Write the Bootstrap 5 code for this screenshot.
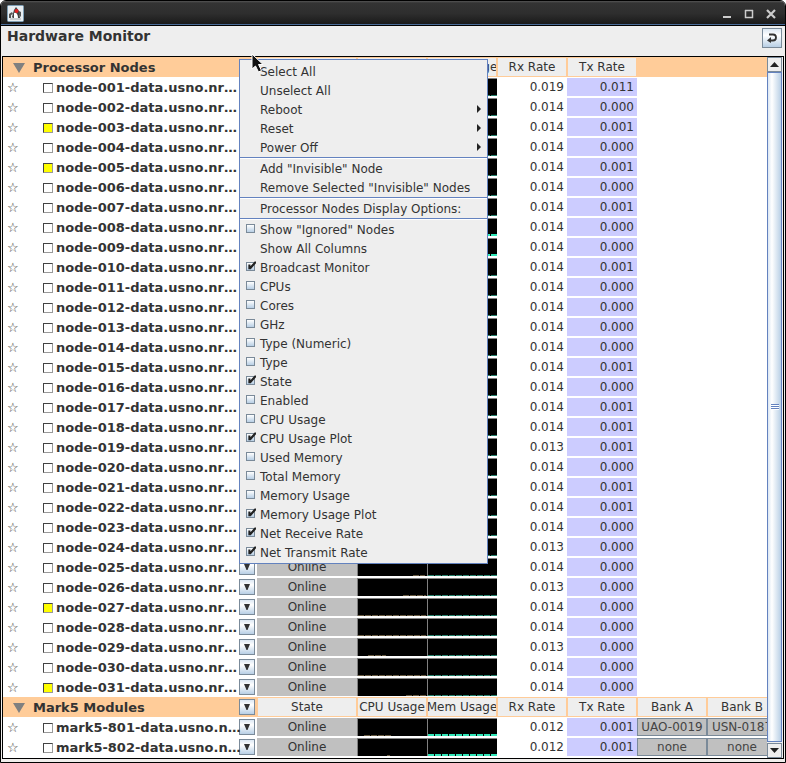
<!DOCTYPE html>
<html lang="en">
<head>
<meta charset="utf-8">
<meta name="viewport" content="width=device-width, initial-scale=1">
<title>Hardware Monitor</title>
<link href="https://cdn.jsdelivr.net/npm/bootstrap@5.3.0/dist/css/bootstrap.min.css" rel="stylesheet">
<style>
:root { --ink:#333; --edge:#7a8a99; --blue:#6382bf; --peach:#ffcc99; --panel:#eee; --metal:linear-gradient(#dde8f3,#fff 35%,#b8cfe5); }
body { font-family:"DejaVu Sans",sans-serif; font-size:12px; line-height:18px; color:var(--ink); background:#fff; }
button { color:inherit; font:inherit; padding:0; }
.frame { min-height:100vh; background:#f0eeec; border:1px solid #000; border-radius:6px 6px 0 0; overflow:hidden; padding:0 1px 3px; }
.titlebar { height:25px; margin:0 -1px; padding:0 3px 0 6px; background:linear-gradient(#555 0,#333 2px,#2e2e2e 50%,#1a1a1a 92%,#4a6c98 92%,#4a6c98 96%,#000 96%); }
.titlebar button { background:none; border:0; width:22px; height:22px; line-height:0; }
.toolbar { height:30px; background:var(--panel); padding:0 2px 0 5px; }
.toolbar h1 { font-size:14px; line-height:20px; font-weight:bold; margin:0; }
.metal { background:var(--metal); border:1px solid var(--edge); }
.reload { width:20px; height:20px; margin-top:2px; line-height:0; }
.pane { border:1px solid #000; background:#fff; }
.viewport { min-width:0; }
.monitor { table-layout:fixed; width:774px; border-collapse:separate; border-spacing:0; }
.monitor td, .monitor th { height:20px; padding:0; border:solid #fff; border-width:1px 0; font-weight:normal; white-space:nowrap; vertical-align:top; }
.cell { height:18px; overflow:hidden; display:flex; justify-content:center; }
.monitor .group th { background:var(--peach); border-color:var(--peach); }
.group .cell { background:var(--panel); margin:0 1px; }
.monitor .group .title { font-weight:bold; font-size:13px; border-width:2px 0 0; }
.title svg { margin:0 8px 2px 10px; }
.nodename { display:flex; align-items:center; height:18px; padding-top:2px; font-weight:bold; font-size:13px; }
.star { flex:none; width:40px; padding-left:4px; background:none; border:0; font-size:13px; line-height:18px; font-weight:normal; text-align:left; }
.pick { appearance:none; width:10px; height:10px; margin:0 3px 0 0; background:#fff; border:1px solid; border-color:#444 #999 #999 #444; flex:none; }
.pick:checked { background:#ff0; }
.drop { display:block; width:16px; height:16px; margin:1px 0 0 1px; line-height:0; }
.drop svg { display:block; margin:auto; }
.state { background:#c0c0c0; }
.num { justify-content:flex-end; padding-right:3px; }
.tx { background:#ccf; }
.bank { background:#c0c0c0; border:1px solid var(--edge); line-height:16px; color:#444; }
.plot { height:18px; background:#000; border:solid #808080; border-width:1px 0 0 1px; display:flex; align-items:flex-end; }
.trace { height:1px; background:repeating-linear-gradient(90deg,currentColor 0 6px,#000 6px 7px); }
.cpu .trace { color:#655840; }
.mem .trace { color:#257f6a; width:100%; }
.mem.busy .trace { color:#30e6b8; height:2px; }
.scroller { width:16px; background:var(--panel); }
.scroller button { width:15px; height:15px; background:var(--panel); border:1px solid var(--edge); line-height:0; }
.thumb { width:15px; border:1px solid var(--blue); background:linear-gradient(90deg,#dce7f3,#fff 30%,#b8cfe5); display:flex; align-items:center; justify-content:center; margin-bottom:1px; }
.grip { width:8px; height:6px; background:repeating-linear-gradient(var(--blue) 0 1px,#fff 1px 2px); }
.popup { position:absolute; left:239px; top:59px; width:249px; padding:2px 0 1px; background:var(--panel); border:1px solid var(--blue); z-index:5; }
.popup button, .popup label, .popup .caption { display:flex; align-items:center; width:100%; height:19px; line-height:17px; padding:2px 6px 0 20px; border:0; background:none; text-align:left; }
.popup label { padding-left:6px; }
.popup svg { margin-bottom:3px; }
.popup hr { margin:0; height:2px; border:0; opacity:1; background:linear-gradient(var(--blue) 50%,#fff 50%); }
.opt { appearance:none; width:9px; height:9px; margin:0 5px 4px 0; border:1px solid var(--edge); background:linear-gradient(#fff,#b8cfe5); flex:none; position:relative; }
.opt:checked::after { content:""; position:absolute; inset:-2px -2px 0 0; background:#222; clip-path:polygon(15% 40%,38% 40%,38% 58%,85% 5%,100% 5%,100% 25%,42% 92%,15% 92%); }
.pointer { position:absolute; left:251px; top:53px; z-index:6; }
</style>
</head>
<body>
<div class="frame d-flex flex-column">
  <header class="titlebar d-flex align-items-center">
    <svg width="17" height="17" viewBox="0 0 17 17" aria-hidden="true"><rect x=".5" y=".5" width="16" height="16" rx="1" fill="#e8eef2" stroke="#7f9fb5"/><path d="M5 12 7 5l2-3 3 4 1 7H6z" fill="#444"/><path d="M7 8c2-1 4 1 4 5H7z" fill="#fff"/><path d="M2 9l3-2 1 2-2 1v3H2zM12 6l2 1v5l-2-2z" fill="#555"/><circle cx="9.500" cy="6" r="2" fill="#e02020"/><path d="M3 14h11" stroke="#aaa"/></svg>
    <div class="ms-auto d-flex">
      <button type="button" aria-label="Minimize"><svg width="10" height="10"><path d="M1 8h8" stroke="#ccc" stroke-width="2"/></svg></button>
      <button type="button" aria-label="Maximize"><svg width="10" height="10"><path d="M1.500 1v7.500h7V1M1 1.500h8" fill="none" stroke="#ccc" stroke-width="1.500"/></svg></button>
      <button type="button" aria-label="Close"><svg width="10" height="10"><path d="M1 1l8 8M9 1 1 9" stroke="#ccc" stroke-width="2.200"/></svg></button>
    </div>
  </header>
  <div class="toolbar d-flex justify-content-between align-items-start">
    <h1>Hardware Monitor</h1>
    <button class="reload metal" type="button" aria-label="Reload"><svg width="12" height="10" fill="none"><path d="M3 1.500h4a3 3 0 0 1 0 6H3" stroke="#333" stroke-width="1.800"/><path d="M5 4v6L1 7.500z" fill="#333"/></svg></button>
  </div>
  <main class="pane d-flex flex-grow-1">
    <div class="viewport flex-grow-1 overflow-hidden">
      <table class="monitor">
        <colgroup><col width="235"><col width="19"><col width="100"><col width="70"><col width="70"><col width="70"><col width="70"><col width="70"><col width="70"></colgroup>
        <tbody id="rows"></tbody>
      </table>
    </div>
    <div class="scroller d-flex flex-column">
      <button type="button" aria-label="Scroll up"><svg width="9" height="5"><path d="M4.500 0 9 5H0z" fill="#222"/></svg></button>
      <div class="thumb flex-grow-1"><span class="grip"></span></div>
      <button type="button" aria-label="Scroll down"><svg width="9" height="5"><path d="M0 0h9L4.500 5z" fill="#222"/></svg></button>
    </div>
  </main>
</div>
<div class="popup" id="popup"></div>
<svg class="pointer" width="14" height="22" viewBox="0 0 14 22" aria-hidden="true"><path d="M1 1v15l3.500-3 3 6 3-1.500-3-6H12z" fill="#111" stroke="#fff"/></svg>

<script src="https://cdn.jsdelivr.net/npm/bootstrap@5.3.0/dist/js/bootstrap.bundle.min.js"></script>
<script>
const drop = label => `<button type="button" class="drop metal" aria-label="${label}"><svg width="6" height="6"><path d="M0 0h6L3.500 6h-1z" fill="#333"/></svg></button>`;

function groupRow(title, columns) {
  const cells = Array.from({length: 7}, (_, i) => `<th>${columns[i] ? `<div class="cell"><span>${columns[i]}</span></div>` : ''}</th>`).join('');
  return `<tr class="group"><th class="title"><svg width="12" height="10"><path d="M0 0h12L6 10z" fill="#808080"/></svg>${title}</th><th>${drop(title + ' menu')}</th>${cells}</tr>`;
}

function nodeRow(n) {
  const banks = [0, 1].map(i => `<td>${n.banks ? `<div class="cell bank"><span>${n.banks[i]}</span></div>` : ''}</td>`).join('');
  return `<tr><td><div class="nodename"><button type="button" class="star" aria-label="Favorite ${n.name}">☆</button><input type="checkbox" class="pick" id="${n.id}" ${n.marked ? 'checked' : ''}><label for="${n.id}">${n.name}</label></div></td>
    <td>${drop(n.name + ' menu')}</td><td><div class="cell state">Online</div></td>
    <td><div class="plot cpu"><span class="trace" style="margin-left:${n.cpu[0]}%;width:${n.cpu[1]}%"></span></div></td>
    <td><div class="plot mem ${n.busy ? 'busy' : ''}"><span class="trace"></span></div></td>
    <td><div class="cell num">${n.rx}</div></td><td><div class="cell num tx">${n.tx}</div></td>${banks}</tr>`;
}

const columns = ['State', 'CPU Usage', 'Mem Usage', 'Rx Rate', 'Tx Rate'];
const rxRates = {1: '0.019', 19: '0.013', 24: '0.013', 26: '0.013', 29: '0.013'};
const txOne = [3, 5, 7, 10, 15, 17, 18, 19, 21, 22];
const cpuSpan = {25: [80, 17], 26: [65, 33], 27: [0, 99], 28: [0, 99], 29: [15, 26], 30: [0, 99], 31: [70, 28]};
let html = groupRow('Processor Nodes', columns);
for (let i = 1; i <= 31; i++) {
  html += nodeRow({
    id: 'node' + i, name: `node-${String(i).padStart(3, '0')}-data.usno.nr…`,
    marked: [3, 5, 27, 31].includes(i), rx: rxRates[i] || '0.014',
    tx: i === 1 ? '0.011' : txOne.includes(i) ? '0.001' : '0.000',
    cpu: cpuSpan[i] || [0, 0], busy: i === 8 || i === 9
  });
}
html += groupRow('Mark5 Modules', [...columns, 'Bank A', 'Bank B']);
html += nodeRow({id: 'm801', name: 'mark5-801-data.usno.n…', rx: '0.012', tx: '0.001', cpu: [8, 40], busy: true, banks: ['UAO-0019', 'USN-0187']});
html += nodeRow({id: 'm802', name: 'mark5-802-data.usno.n…', rx: '0.012', tx: '0.001', cpu: [42, 5], busy: true, banks: ['none', 'none']});
document.getElementById('rows').innerHTML = html;

const action = t => `<button type="button">${t}</button>`;
const submenu = t => `<button type="button">${t}<svg class="ms-auto" width="4" height="8"><path d="M0 0l4 4-4 4z" fill="#222"/></svg></button>`;
const option = (t, on) => `<label><input type="checkbox" class="opt" ${on ? 'checked' : ''}>${t}</label>`;
document.getElementById('popup').innerHTML =
  ['Select All', 'Unselect All'].map(action).join('') + ['Reboot', 'Reset', 'Power Off'].map(submenu).join('') + '<hr>' +
  ['Add "Invisible" Node', 'Remove Selected "Invisible" Nodes'].map(action).join('') +
  '<hr><div class="caption">Processor Nodes Display Options:</div><hr>' +
  option('Show "Ignored" Nodes') + action('Show All Columns') + option('Broadcast Monitor', true) +
  ['CPUs', 'Cores', 'GHz', 'Type (Numeric)', 'Type'].map(t => option(t)).join('') +
  option('State', true) + option('Enabled') + option('CPU Usage') + option('CPU Usage Plot', true) +
  ['Used Memory', 'Total Memory', 'Memory Usage'].map(t => option(t)).join('') +
  ['Memory Usage Plot', 'Net Receive Rate', 'Net Transmit Rate'].map(t => option(t, true)).join('');
</script>
</body>
</html>
